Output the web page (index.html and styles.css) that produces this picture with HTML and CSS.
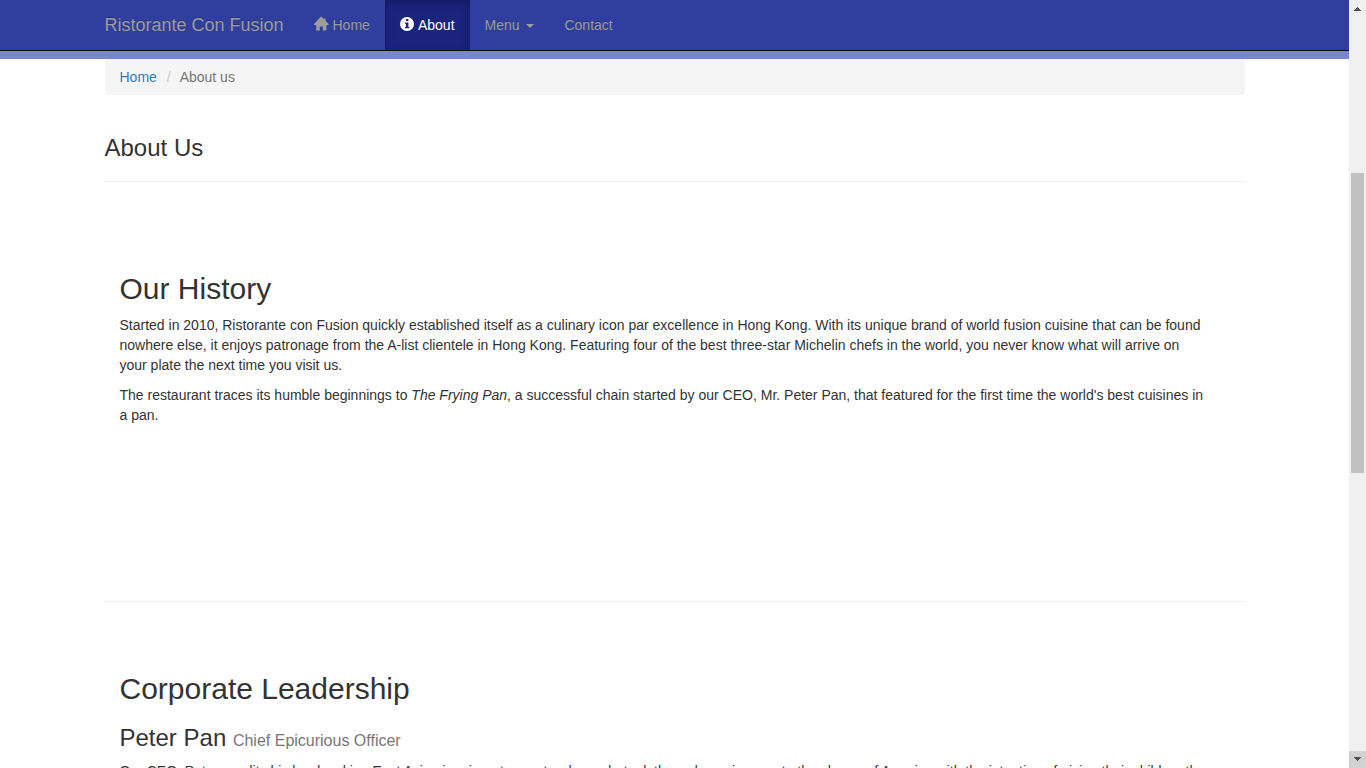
FILE: index.html
```html
<!DOCTYPE html>
<html lang="en">
<head>
<meta charset="utf-8">
<title>Ristorante Con Fusion: About Us</title>
<link rel="stylesheet" href="styles.css">
</head>
<body>
<div class="viewport">
  <div class="page">
    <nav class="navbar">
      <div class="container navbar-inner">
        <a class="brand" href="#">Ristorante Con Fusion</a>
        <ul class="nav">
          <li><a class="nav-link" href="#"><svg class="icon" viewBox="0 0 14 14" aria-hidden="true"><path d="M7 -.6 L10 2.3 V1.4 H11.6 V3.9 L14.6 7 V8 H12.4 V13.6 H8.8 V9.6 H5.8 V13.6 H2.2 V8 H0 V7 Z"/></svg> Home</a></li>
          <li><a class="nav-link active" href="#"><svg class="icon" viewBox="0 0 14 14" aria-hidden="true"><path fill-rule="evenodd" d="M7 0a7 7 0 1 0 0 14A7 7 0 0 0 7 0ZM6 2h2.4v2H6ZM5 5.4h3.4v4.5h1v1.3H4.9V9.9h1V6.7H5Z"/></svg> About</a></li>
          <li><a class="nav-link" href="#">Menu <span class="caret"></span></a></li>
          <li><a class="nav-link" href="#">Contact</a></li>
        </ul>
      </div>
    </nav>
    <div class="band"></div>
    <main class="container">
      <ol class="breadcrumb">
        <li><a href="#">Home</a></li>
        <li class="current">About us</li>
      </ol>
      <h3 class="page-title">About Us</h3>
      <section class="row history">
        <h2>Our History</h2>
        <p>Started in 2010, Ristorante con Fusion quickly established itself as a culinary icon par excellence in Hong Kong. With its unique brand of world fusion cuisine that can be found nowhere else, it enjoys patronage from the A-list clientele in Hong Kong. Featuring four of the best three-star Michelin chefs in the world, you never know what will arrive on your plate the next time you visit us.</p>
        <p>The restaurant traces its humble beginnings to <em>The Frying Pan</em>, a successful chain started by our CEO, Mr. Peter Pan, that featured for the first time the world's best cuisines in a&nbsp;pan.</p>
      </section>
      <section class="row leadership">
        <h2>Corporate Leadership</h2>
        <h3>Peter Pan <small>Chief Epicurious Officer</small></h3>
        <p>Our CEO, Peter, credits his hardworking East Asian immigrant parents who undertook the arduous journey to the shores of America with the intention of giving their children the best future.</p>
      </section>
    </main>
  </div>
  <div class="scrollbar" aria-hidden="true">
    <svg class="scroll-button" viewBox="0 0 17 17" shape-rendering="crispEdges"><path d="M8 7h1v1h1v1h1v1h1v1H5v-1h1V9h1V8h1Z"/></svg>
    <div class="scroll-track"><div class="scroll-thumb"></div></div>
    <svg class="scroll-button pressed" viewBox="0 0 17 17" shape-rendering="crispEdges"><path d="M5 6h7v1h-1v1h-1v1H9v1H8V9H7V8H6V7H5Z"/></svg>
  </div>
</div>
</body>
</html>
```

FILE: styles.css
```css
* { box-sizing: border-box; }

body {
  margin: 0;
  font: 14px/20px "Liberation Sans", Arial, sans-serif;
  color: #333;
  background: #fff;
}

a { color: #337ab7; text-decoration: none; }

.viewport { display: flex; height: 100vh; }
.page { flex: 1; min-width: 0; overflow: hidden; }

.container { max-width: 1170px; margin: 0 auto; padding: 0 15px; }

/* Navigation */
.navbar { background: #303f9f; border-bottom: 1px solid #080808; }
.navbar-inner { display: flex; }
.brand, .nav-link {
  display: block;
  color: #9d9d9d;
  line-height: 20px;
  text-shadow: 0 -1px 0 rgba(0, 0, 0, .25);
}
.brand { padding: 15px 15px 15px 0; font-size: 18px; }
.nav { display: flex; margin: 0; padding: 0; list-style: none; }
.nav-link { padding: 15px; }
.nav-link.active {
  color: #fff;
  background: #1a237e;
  box-shadow: inset 0 3px 9px rgba(0, 0, 0, .25);
}
.icon {
  width: 14px;
  height: 14px;
  margin-right: 1px;
  fill: currentColor;
  overflow: visible;
  vertical-align: -1px;
}
.caret {
  display: inline-block;
  margin-left: 3px;
  vertical-align: middle;
  border-top: 4px solid;
  border-left: 4px solid transparent;
  border-right: 4px solid transparent;
}
.band { height: 8px; background: #7986cb; }

/* Breadcrumb */
.breadcrumb {
  display: flex;
  margin: 0 0 40px;
  padding: 8px 15px;
  list-style: none;
  background: #f5f5f5;
  border-radius: 4px;
}
.breadcrumb .current { color: #777; }
.breadcrumb li + li::before { content: "/\00a0"; padding: 0 5px 0 10px; color: #ccc; }

/* Content */
h2, h3 { margin: 0 0 10px; font-weight: normal; }
h2 { font-size: 30px; line-height: 33px; }
h3 { font-size: 24px; line-height: 26px; }
h3 small { font-size: 16px; line-height: 16px; color: #777; }
p { margin: 0 0 10px; }

.page-title { margin-bottom: 20px; }
.row { border-top: 1px solid #eee; padding: 90px 36px 0 15px; }
.history { min-height: 420px; }
.leadership { padding-top: 70px; }
.leadership h2 { margin-bottom: 20px; }

/* Scrollbar */
.scrollbar { display: flex; flex-direction: column; width: 17px; background: #f0f0f0; }
.scroll-button { width: 17px; height: 17px; fill: #505050; }
.scroll-button.pressed { background: #d2d2d2; }
.scroll-track { flex: 1; padding: 156px 2px 0; }
.scroll-thumb { height: 300px; background: #c1c1c1; }
```
